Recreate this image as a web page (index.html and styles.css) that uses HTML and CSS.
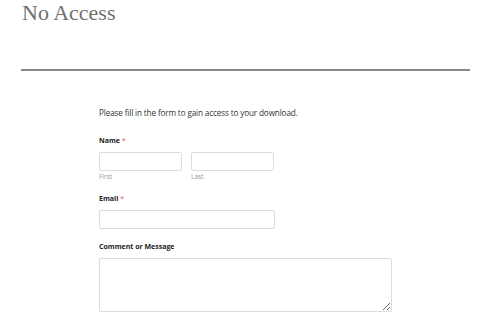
FILE: index.html
```html
<!DOCTYPE html>
<html lang="en">
<head>
    <meta charset="UTF-8">
    <meta name="viewport" content="width=device-width, initial-scale=1.0">
    <title>No Access</title>
    <link rel="stylesheet" href="styles.css">
</head>
<body>

    <div class="page">
        <!-- Cabecera -->
        <h1 class="page-title">No Access</h1>
        <div class="separator"></div>

        <!-- Formulario -->
        <form class="access-form" method="post" action="#">
            <p class="intro">Please fill in the form to gain access to your download.</p>

            <div class="field">
                <label class="field-label">Name <span class="required">*</span></label>
                <div class="name-row">
                    <div class="name-part">
                        <input type="text" name="first">
                        <span class="sublabel">First</span>
                    </div>
                    <div class="name-part">
                        <input type="text" name="last">
                        <span class="sublabel">Last</span>
                    </div>
                </div>
            </div>

            <div class="field">
                <label class="field-label">Email <span class="required">*</span></label>
                <input type="email" name="email" class="email-input">
            </div>

            <div class="field">
                <label class="field-label">Comment or Message</label>
                <textarea name="message" class="message"></textarea>
            </div>
        </form>
    </div>

</body>
</html>
```

FILE: styles.css
```css
body {
    font-family: "Open Sans", "Liberation Sans", sans-serif;
    background-color: #fff;
    color: #333;
    margin: 0;
    padding: 0;
}

.page {
    padding: 0 10px 0 21px;
}

.page-title {
    margin: 0;
    padding-left: 1px;
    font-family: "Liberation Serif", serif;
    font-weight: normal;
    font-size: 22px;
    line-height: 26px;
    color: #707070;
}

.separator {
    margin-top: 43px;
    height: 2px;
    background-color: #888;
}

.access-form {
    width: 293px;
    margin: 0 auto;
}

.intro {
    margin: 35px 0 15px;
    font-size: 8.2px;
    letter-spacing: -0.15px;
    line-height: 14px;
    color: #333;
}

.field {
    margin-bottom: 12px;
}

.field-label {
    display: block;
    font-size: 7px;
    font-weight: bold;
    line-height: 12px;
    margin-bottom: 5px;
    color: #222;
}

.required {
    color: #d9534f;
    font-weight: normal;
}

.name-row {
    display: flex;
    gap: 9px;
}

.name-part {
    display: flex;
    flex-direction: column;
    width: 83px;
}

input,
textarea {
    box-sizing: border-box;
    border: 1px solid #dcdcdc;
    border-radius: 2px;
    margin: 0;
    padding: 4px;
    font-family: inherit;
}

.name-part input {
    width: 100%;
    height: 19px;
}

.sublabel {
    font-size: 6.5px;
    line-height: 9px;
    margin-top: 1px;
    color: #999;
}

.email-input {
    display: block;
    width: 176px;
    height: 19px;
}

.message {
    display: block;
    width: 293px;
    height: 54px;
}
```
